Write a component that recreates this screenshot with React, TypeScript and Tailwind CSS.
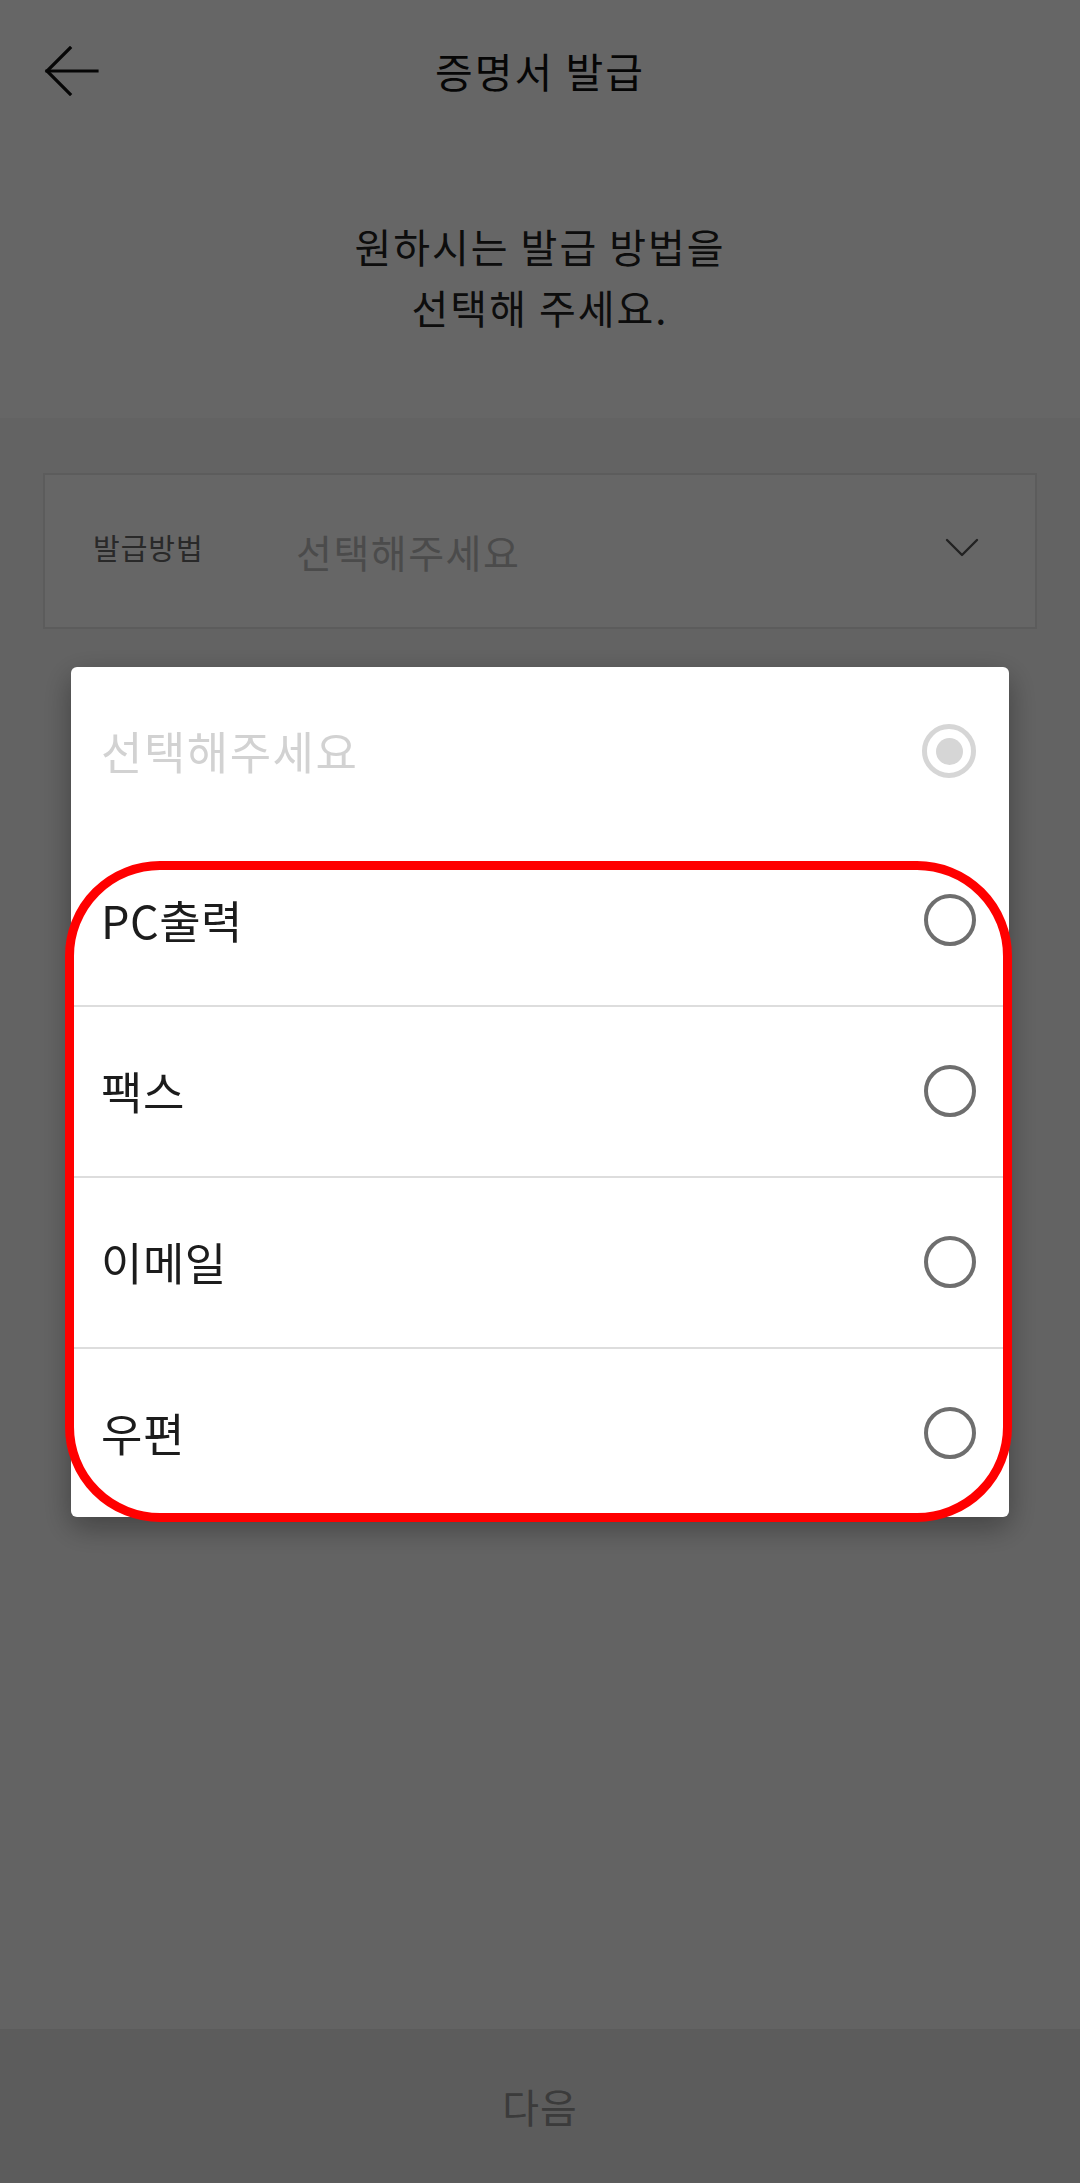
import React from "react";

const options = ["PC출력", "팩스", "이메일", "우편"];

const BackArrow = () => (
    <svg width="56" height="50" viewBox="0 0 56 50" fill="none" stroke="#111" strokeWidth="3.2" strokeLinecap="square">
        <path d="M3 25H53" />
        <path d="M26 2L3 25L26 48" />
    </svg>
);

const Chevron = () => (
    <svg width="34" height="19" viewBox="0 0 34 19" fill="none" stroke="#555" strokeWidth="2.4" strokeLinecap="round" strokeLinejoin="round">
        <path d="M2 2L17 17L32 2" />
    </svg>
);

const Radio = ({ checked }: { checked?: boolean }) =>
    checked ? (
        <span className="flex h-[54px] w-[54px] items-center justify-center rounded-full border-[5px] border-[#d6d6d6]">
            <span className="h-[27px] w-[27px] rounded-full bg-[#d6d6d6]" />
        </span>
    ) : (
        <span className="h-[52px] w-[52px] rounded-full border-[4px] border-[#6e6e6e]" />
    );

export default function App() {
    return (
        <div className="relative font-['Noto_Sans_CJK_KR',sans-serif]">
            <div className="flex h-[2183px] w-full flex-col bg-[#f7f7f7]">
                <div className="h-[418px] bg-white">
                    <header className="flex h-[142px] items-center">
                        <div className="flex w-[160px] pl-[44px]">
                            <BackArrow />
                        </div>
                        <h1 className="flex-1 text-center text-[41px] tracking-[2px] text-[#111]">증명서 발급</h1>
                        <div className="w-[160px]" />
                    </header>
                    <p className="pt-[74px] text-center text-[40px] leading-[61px] tracking-[2px] text-[#222]">
                        원하시는 발급 방법을
                        <br />
                        선택해 주세요.
                    </p>
                </div>

                <div className="mx-[43px] mt-[55px] flex h-[156px] items-center border-2 border-[#e6e6e6] bg-white pl-[48px] pr-[56px]">
                    <span className="w-[203px] pb-[7px] text-[29px] tracking-[1px] text-[#666]">발급방법</span>
                    <span className="flex-1 text-[39px] tracking-[1.5px] text-[#bbb]">선택해주세요</span>
                    <span className="pb-[8px]">
                        <Chevron />
                    </span>
                </div>

                <div className="mt-auto flex h-[154px] items-center justify-center bg-[#e6e6e6]">
                    <span className="text-[40px] tracking-[1px] text-[#939393]">다음</span>
                </div>
            </div>

            {/* dim layer */}
            <div className="fixed inset-0 z-10 bg-black/60" />

            {/* select dialog */}
            <div className="fixed inset-0 z-20 flex items-center justify-center">
                <div className="relative w-[938px] rounded-[6px] bg-white shadow-[0_10px_30px_rgba(0,0,0,0.35)]">
                    <div className="flex h-[169px] items-center justify-between pl-[30px] pr-[33px]">
                        <span className="text-[45px] tracking-[1.5px] text-[#d2d2d2]">선택해주세요</span>
                        <Radio checked />
                    </div>
                    {options.map((label, i) => (
                        <div
                            key={label}
                            className={
                                i < options.length - 1
                                    ? "flex h-[171px] items-center justify-between border-b-2 border-[#dddddd] pl-[30px] pr-[33px]"
                                    : "flex h-[168px] items-center justify-between pl-[30px] pr-[33px]"
                            }
                        >
                            <span className="text-[45px] tracking-[0.5px] text-[#1c1c1c]">{label}</span>
                            <Radio />
                        </div>
                    ))}

                    {/* red highlight */}
                    <div className="pointer-events-none absolute -bottom-[5px] -left-[6px] -right-[3px] top-[194px] rounded-[95px] border-[9px] border-[#ff0000]" />
                </div>
            </div>
        </div>
    );
}
